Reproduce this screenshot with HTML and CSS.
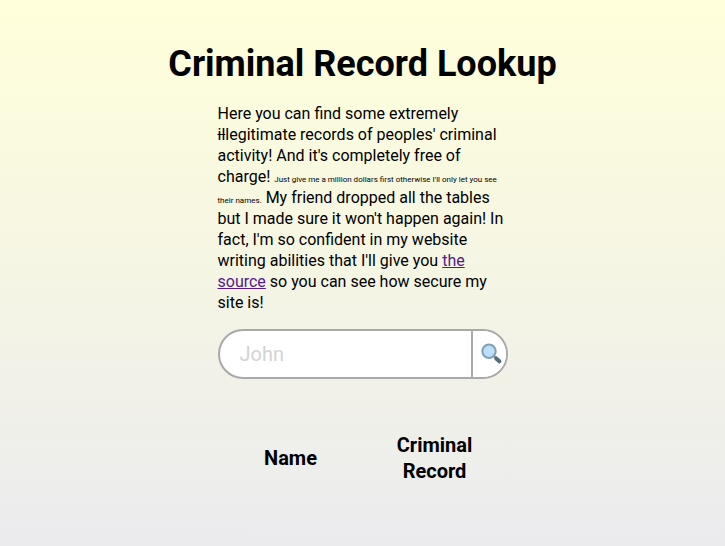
FILE: index.html
```html
<!DOCTYPE html>
<html lang="en">
<head>
<meta charset="utf-8">
<title>Criminal Record Lookup</title>
<link rel="stylesheet" href="styles.css">
</head>
<body>
<main>
<h1>Criminal Record Lookup</h1>
<p class="intro">Here you can find some extremely <s>il</s>legitimate records of peoples' criminal activity! And it's completely free of charge! <span class="fine">Just give me a million dollars first otherwise I'll only let you see their names.</span> My friend dropped all the tables but I made sure it won't happen again! In fact, I'm so confident in my website writing abilities that I'll give you <a class="source" href="#">the source</a> so you can see how secure my site is!</p>
<form class="search">
<input class="query" type="text" placeholder="John">
<button class="go" type="button" aria-label="Search">
<svg width="22" height="22" viewBox="0 0 22 22">
<path d="M12.5 12.5l2.5 2.5" stroke="#78909c" stroke-width="2"/>
<path d="M15.2 15.4l3.2 2.9" stroke="#546e7a" stroke-width="4" stroke-linecap="round"/>
<circle cx="8" cy="8.3" r="6.7" fill="#bbdefb" stroke="#819fb2" stroke-width="2"/>
</svg>
</button>
</form>
<table class="results"><tr><th>Name</th><th>Criminal Record</th></tr></table>
</main>
</body>
</html>
```

FILE: styles.css
```css
html { height: 100%; }
body {
  margin: 0;
  min-height: 100%;
  font-family: Roboto, sans-serif;
  background: linear-gradient(#ffffdb, #ebebee) no-repeat;
  color: #000;
}
main { display: flex; flex-direction: column; align-items: center; padding-top: 43px; }
h1 { margin: 0; font-size: 36px; line-height: 42px; font-weight: 700; }
.intro { width: 290px; margin: 18px 0 16px; font-size: 16px; line-height: 21px; }
.fine { font-size: 8px; line-height: 1; }
.source { color: #551a8b; }
.search {
  display: flex;
  box-sizing: border-box;
  width: 290px;
  height: 50px;
  border: 2px solid #a9a9a9;
  border-radius: 25px;
  background: #fff;
  overflow: hidden;
}
.query { flex: 1; min-width: 0; border: 0; padding: 0 20px; font: 20px Roboto, sans-serif; outline: 0; background: none; }
.query::placeholder { color: #d3d3d3; }
.go { box-sizing: border-box; width: 35px; border: 0; border-left: 2px solid #a9a9a9; background: #fff; padding: 0 0 0 8px; display: flex; align-items: center; }
.go svg { flex: none; }
.results { width: 288px; margin-top: 53px; border-collapse: collapse; table-layout: fixed; }
.results th { padding: 0 20px; font-size: 20px; line-height: 26px; }
```
